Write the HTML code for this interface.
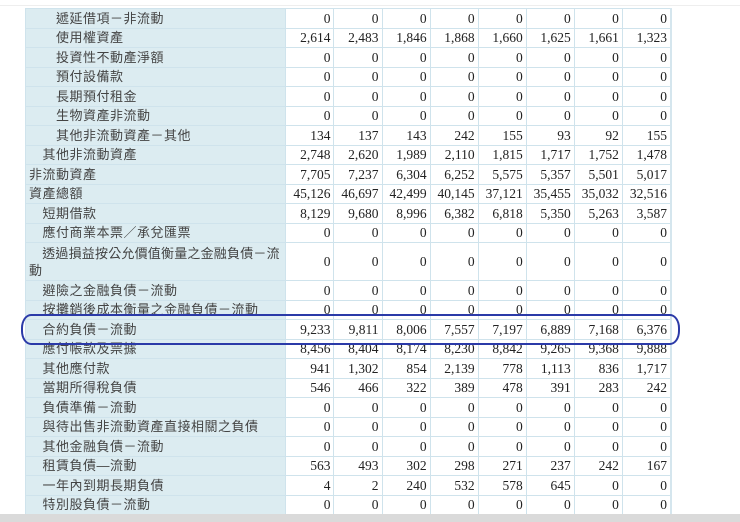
<!DOCTYPE html>
<html><head><meta charset="utf-8"><style>
body{margin:0;width:740px;height:522px;background:#fff;overflow:hidden;position:relative;font-family:"Liberation Sans","Noto Sans CJK TC",sans-serif}
.top{position:absolute;left:0;top:5px;width:740px;height:1px;background:#eee}
table{position:absolute;left:25px;top:8px;border-collapse:collapse;table-layout:fixed;width:646px}
td{border:1px solid #cfe3ec;height:18.5px;padding:0;font-size:13px;color:#333;line-height:17px}
td.l{background:#dcecf1;width:256px;padding-left:3px;color:#444;white-space:normal;letter-spacing:0.5px}
td.l.w{letter-spacing:0.2px}
td.n{width:44px;text-align:right;padding-right:3px;font-family:"Liberation Serif",serif;font-size:13.5px;color:#222}
tr.t td{height:37px}
.bar{position:absolute;left:0;top:514px;width:740px;height:8px;background:#dadada}
.rb{position:absolute;left:670px;top:8px;width:2px;height:506px;background:#d5e6ee}
.ell{position:absolute;left:21px;top:314px;width:655px;height:27px;border:2px solid #2b3aa8;border-radius:10px/14px}
</style></head><body>
<div class="top"></div>
<table>
<tr><td class="l">　　遞延借項－非流動</td><td class="n">0</td><td class="n">0</td><td class="n">0</td><td class="n">0</td><td class="n">0</td><td class="n">0</td><td class="n">0</td><td class="n">0</td></tr>
<tr><td class="l">　　使用權資產</td><td class="n">2,614</td><td class="n">2,483</td><td class="n">1,846</td><td class="n">1,868</td><td class="n">1,660</td><td class="n">1,625</td><td class="n">1,661</td><td class="n">1,323</td></tr>
<tr><td class="l">　　投資性不動產淨額</td><td class="n">0</td><td class="n">0</td><td class="n">0</td><td class="n">0</td><td class="n">0</td><td class="n">0</td><td class="n">0</td><td class="n">0</td></tr>
<tr><td class="l">　　預付設備款</td><td class="n">0</td><td class="n">0</td><td class="n">0</td><td class="n">0</td><td class="n">0</td><td class="n">0</td><td class="n">0</td><td class="n">0</td></tr>
<tr><td class="l">　　長期預付租金</td><td class="n">0</td><td class="n">0</td><td class="n">0</td><td class="n">0</td><td class="n">0</td><td class="n">0</td><td class="n">0</td><td class="n">0</td></tr>
<tr><td class="l">　　生物資產非流動</td><td class="n">0</td><td class="n">0</td><td class="n">0</td><td class="n">0</td><td class="n">0</td><td class="n">0</td><td class="n">0</td><td class="n">0</td></tr>
<tr><td class="l">　　其他非流動資產－其他</td><td class="n">134</td><td class="n">137</td><td class="n">143</td><td class="n">242</td><td class="n">155</td><td class="n">93</td><td class="n">92</td><td class="n">155</td></tr>
<tr><td class="l">　其他非流動資產</td><td class="n">2,748</td><td class="n">2,620</td><td class="n">1,989</td><td class="n">2,110</td><td class="n">1,815</td><td class="n">1,717</td><td class="n">1,752</td><td class="n">1,478</td></tr>
<tr><td class="l">非流動資產</td><td class="n">7,705</td><td class="n">7,237</td><td class="n">6,304</td><td class="n">6,252</td><td class="n">5,575</td><td class="n">5,357</td><td class="n">5,501</td><td class="n">5,017</td></tr>
<tr><td class="l">資產總額</td><td class="n">45,126</td><td class="n">46,697</td><td class="n">42,499</td><td class="n">40,145</td><td class="n">37,121</td><td class="n">35,455</td><td class="n">35,032</td><td class="n">32,516</td></tr>
<tr><td class="l">　短期借款</td><td class="n">8,129</td><td class="n">9,680</td><td class="n">8,996</td><td class="n">6,382</td><td class="n">6,818</td><td class="n">5,350</td><td class="n">5,263</td><td class="n">3,587</td></tr>
<tr><td class="l">　應付商業本票／承兌匯票</td><td class="n">0</td><td class="n">0</td><td class="n">0</td><td class="n">0</td><td class="n">0</td><td class="n">0</td><td class="n">0</td><td class="n">0</td></tr>
<tr class="t"><td class="l w">　透過損益按公允價值衡量之金融負債－流動</td><td class="n">0</td><td class="n">0</td><td class="n">0</td><td class="n">0</td><td class="n">0</td><td class="n">0</td><td class="n">0</td><td class="n">0</td></tr>
<tr><td class="l">　避險之金融負債－流動</td><td class="n">0</td><td class="n">0</td><td class="n">0</td><td class="n">0</td><td class="n">0</td><td class="n">0</td><td class="n">0</td><td class="n">0</td></tr>
<tr><td class="l">　按攤銷後成本衡量之金融負債－流動</td><td class="n">0</td><td class="n">0</td><td class="n">0</td><td class="n">0</td><td class="n">0</td><td class="n">0</td><td class="n">0</td><td class="n">0</td></tr>
<tr><td class="l">　合約負債－流動</td><td class="n">9,233</td><td class="n">9,811</td><td class="n">8,006</td><td class="n">7,557</td><td class="n">7,197</td><td class="n">6,889</td><td class="n">7,168</td><td class="n">6,376</td></tr>
<tr><td class="l">　應付帳款及票據</td><td class="n">8,456</td><td class="n">8,404</td><td class="n">8,174</td><td class="n">8,230</td><td class="n">8,842</td><td class="n">9,265</td><td class="n">9,368</td><td class="n">9,888</td></tr>
<tr><td class="l">　其他應付款</td><td class="n">941</td><td class="n">1,302</td><td class="n">854</td><td class="n">2,139</td><td class="n">778</td><td class="n">1,113</td><td class="n">836</td><td class="n">1,717</td></tr>
<tr><td class="l">　當期所得稅負債</td><td class="n">546</td><td class="n">466</td><td class="n">322</td><td class="n">389</td><td class="n">478</td><td class="n">391</td><td class="n">283</td><td class="n">242</td></tr>
<tr><td class="l">　負債準備－流動</td><td class="n">0</td><td class="n">0</td><td class="n">0</td><td class="n">0</td><td class="n">0</td><td class="n">0</td><td class="n">0</td><td class="n">0</td></tr>
<tr><td class="l">　與待出售非流動資產直接相關之負債</td><td class="n">0</td><td class="n">0</td><td class="n">0</td><td class="n">0</td><td class="n">0</td><td class="n">0</td><td class="n">0</td><td class="n">0</td></tr>
<tr><td class="l">　其他金融負債－流動</td><td class="n">0</td><td class="n">0</td><td class="n">0</td><td class="n">0</td><td class="n">0</td><td class="n">0</td><td class="n">0</td><td class="n">0</td></tr>
<tr><td class="l">　租賃負債—流動</td><td class="n">563</td><td class="n">493</td><td class="n">302</td><td class="n">298</td><td class="n">271</td><td class="n">237</td><td class="n">242</td><td class="n">167</td></tr>
<tr><td class="l">　一年內到期長期負債</td><td class="n">4</td><td class="n">2</td><td class="n">240</td><td class="n">532</td><td class="n">578</td><td class="n">645</td><td class="n">0</td><td class="n">0</td></tr>
<tr><td class="l">　特別股負債－流動</td><td class="n">0</td><td class="n">0</td><td class="n">0</td><td class="n">0</td><td class="n">0</td><td class="n">0</td><td class="n">0</td><td class="n">0</td></tr>
</table>
<div class="rb"></div>
<div class="ell"></div>
<div class="bar"></div>
</body></html>
